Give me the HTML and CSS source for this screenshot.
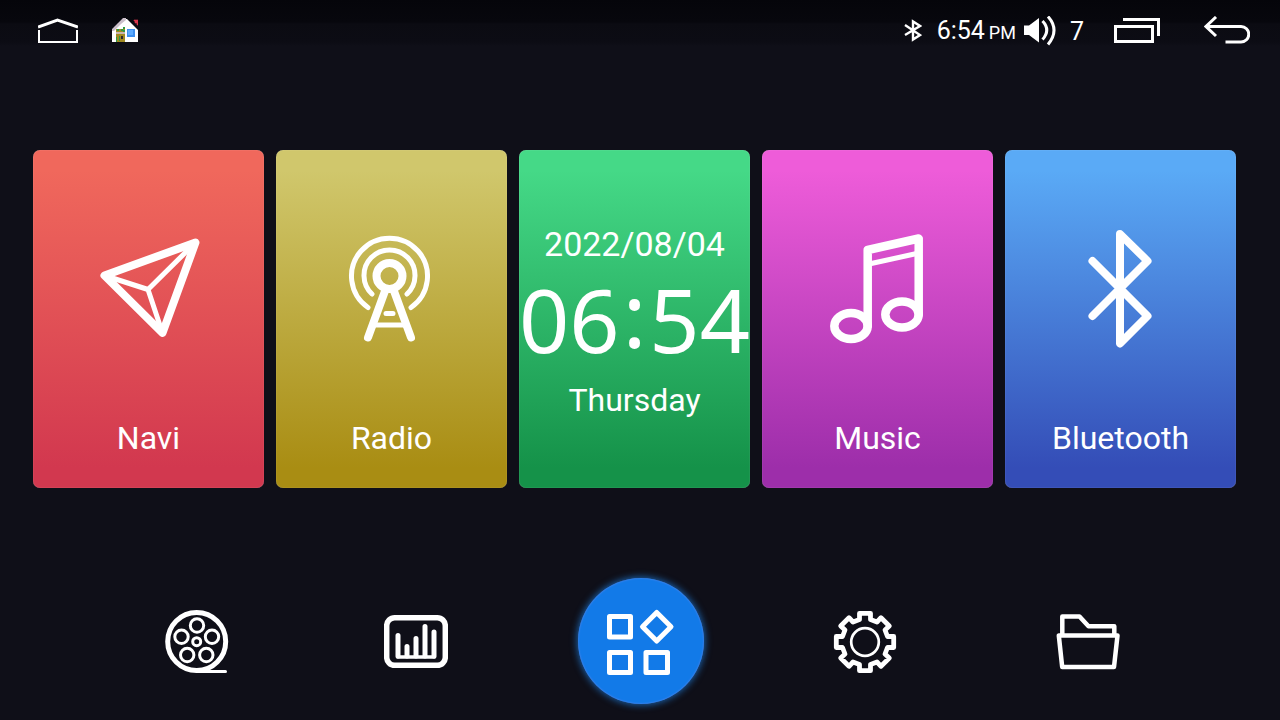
FILE: index.html
```html
<!DOCTYPE html>
<html lang="en">
<head>
<meta charset="utf-8">
<meta name="viewport" content="width=device-width, initial-scale=1">
<title>Home</title>
<link rel="stylesheet" href="styles.css">
</head>
<body>
<header class="status">
  <button class="plain" aria-label="Home">
    <svg width="40" height="26" viewBox="0 0 40 26" fill="none" stroke="#fff">
      <path d="M0 9 19.500 2 40 9" stroke-width="3"/>
      <path d="M1 12V24H39V12" stroke-width="2"/>
    </svg>
  </button>
  <button class="plain launcher" aria-label="Launcher">
    <svg width="26" height="26" viewBox="0 0 26 26">
      <path d="M0 12 12 1h3l9 9 2 2v12H0z" fill="#fff"/>
      <path d="M0 13v-2l3-3 3-3 5-5h3v2l-5 4-4 4-3 3z" fill="#cbbfca"/>
      <path d="M22 2h4v5h-1V5h-2V3h-1z" fill="#d8384c" stroke="#d8384c" stroke-width=".6"/>
      <path d="M4 11h9v13H4z" fill="#a08a22"/>
      <path d="M5 11h2v2H5zM9 11h2v2H9zM7 18h1v5H7zM4 19h1v5H4zM11 12h2v2h-2zM11 9h2v2h-2z" fill="#2f9b45"/>
      <path d="M4 14h9v2H4z" fill="#c9b5b0"/>
      <path d="M9 18h2v3H9z" fill="#2a2530"/>
      <path d="M15 11h8v8h-8z" fill="#3c8ff0"/>
      <path d="M16 12h5v5h-5z" fill="#5dabff"/>
    </svg>
  </button>
  <div class="system">
    <svg width="18" height="24" viewBox="0 0 18 24" fill="none" stroke="#fff" stroke-width="2.400" role="img" aria-label="Bluetooth on">
      <path d="M1 6 16 16 9 20.500V2.500L16 7 1 16"/>
    </svg>
    <div class="clock"><span>6:54</span><span class="period">PM</span></div>
    <div class="volume">
      <svg width="32" height="30" viewBox="0 0 32 30" role="img" aria-label="Volume">
        <path d="M0 9.500H5L15 2V26.500L5 19H0z" fill="#fff"/>
        <path d="M18.500 5Q27 14 18.500 23.500M24 0.500Q36 14 24 28.500" fill="none" stroke="#fff" stroke-width="3"/>
      </svg>
      <span>7</span>
    </div>
  </div>
  <button class="plain recents" aria-label="Recent apps">
    <svg width="46" height="26" viewBox="0 0 46 26" fill="none" stroke="#fff" stroke-width="3">
      <path d="M1.500 8.500H38.500V23.500H1.500zM9 1.500H44.500V18"/>
    </svg>
  </button>
  <button class="plain back" aria-label="Back">
    <svg width="46" height="30" viewBox="0 0 46 30" fill="none" stroke="#fff" stroke-width="3">
      <path d="M12 1 2 10.500 12 20M2 10.500H37A7.700 7.700 0 0 1 37 26H21.500"/>
    </svg>
  </button>
</header>

<main class="cards">
  <button class="card navi">
    <svg class="art" viewBox="0 0 120 120">
      <path d="M15.500 46.500 106.500 13.500 73.500 104z" stroke-width="8"/>
      <path d="M15.500 46.500 59 60.500 106.500 13.500M59 60.500 73.500 104" stroke-width="5"/>
    </svg>
    <span>Navi</span>
  </button>
  <button class="card radio">
    <svg class="art" viewBox="0 0 120 120">
      <circle cx="57.500" cy="47" r="13" stroke-width="8"/>
      <path d="M40 65A25.500 25.500 0 1 1 75 65M36 78.500A38 38 0 1 1 79 78.500M42 96H74M54 84.500H61" stroke-width="5"/>
      <path d="M53 62 36 108.500M62 62 79 108.500" stroke-width="8"/>
    </svg>
    <span>Radio</span>
  </button>
  <section class="card today" aria-label="Date and time">
    <span class="date">2022/08/04</span>
    <div class="time"><span>06</span><span class="colon">:</span><span>54</span></div>
    <span class="day">Thursday</span>
  </section>
  <button class="card music">
    <svg class="art" viewBox="0 0 120 120">
      <g stroke-width="8.500">
        <ellipse cx="33" cy="97" rx="16.700" ry="13"/>
        <ellipse cx="84" cy="85.500" rx="16.700" ry="13"/>
        <path d="M49.700 97V21L100.700 9.500V85.500"/>
      </g>
      <path d="M51 35 101 24" stroke-width="5"/>
    </svg>
    <span>Music</span>
  </button>
  <button class="card bluetooth">
    <svg class="art" viewBox="0 0 120 120" stroke-width="8">
      <path d="M31.500 32 86.500 87 59 114.500V5L86.500 32 31.500 87"/>
    </svg>
    <span>Bluetooth</span>
  </button>
</main>

<nav class="dock">
  <button class="plain" aria-label="Video">
    <svg width="64" height="64" viewBox="0 0 64 64" fill="none" stroke="#fff" stroke-width="3" stroke-linecap="round">
      <circle cx="31.700" cy="31.500" r="29" stroke-width="5"/>
      <circle cx="32" cy="15.500" r="6.700"/>
      <circle cx="16.500" cy="26.700" r="6.700"/>
      <circle cx="47" cy="26.700" r="6.700"/>
      <circle cx="22.200" cy="45" r="6.700"/>
      <circle cx="41.300" cy="45" r="6.700"/>
      <circle cx="31.700" cy="31.700" r="4"/>
      <path d="M32 61.500H60.500"/>
    </svg>
  </button>
  <button class="plain" aria-label="Equalizer">
    <svg width="64" height="64" viewBox="0 0 64 64" fill="none" stroke="#fff" stroke-width="5" stroke-linecap="round">
      <rect x="2.700" y="7.700" width="58.600" height="47.600" rx="8" stroke-width="5.500"/>
      <path d="M14 25.500V46M23 36.500V46M32 28.500V46M41 16.500V46M50 22V46"/>
      <path d="M13.500 47H50.500" stroke-width="3.500"/>
    </svg>
  </button>
  <button class="apps" aria-label="All apps">
    <svg width="72" height="72" viewBox="0 0 72 72" fill="none" stroke="#fff" stroke-width="5" stroke-linejoin="round">
      <rect x="4.500" y="11.500" width="21" height="20.500"/>
      <rect x="4.500" y="47.500" width="21" height="20"/>
      <rect x="41" y="47.500" width="21.500" height="20"/>
      <path d="M51.700 7.500 66 21.700 51.700 36 37.500 21.700z"/>
    </svg>
  </button>
  <button class="plain" aria-label="Settings">
    <svg width="64" height="64" viewBox="-32 -32 64 64" fill="none" stroke="#fff" stroke-linejoin="round">
      <path stroke-width="4.800" d="M-5.500-28.700H5.500V-22.500L12-20 16-24.300 24.300-16 20-12 22.500-5.500H28.700V5.500H22.500L20 12 24.300 16 16 24.300 12 20 5.500 22.500V28.700H-5.500V22.500L-12 20-16 24.300-24.300 16-20 12-22.500 5.500H-28.700V-5.500H-22.500L-20-12-24.300-16-16-24.300-12-20-5.500-22.500z"/>
      <circle r="13.800" stroke-width="2.700"/>
    </svg>
  </button>
  <button class="plain" aria-label="Files">
    <svg width="64" height="64" viewBox="0 0 64 64" fill="none" stroke="#fff" stroke-width="4.500" stroke-linejoin="round">
      <path d="M6.300 25V6.500H23.500L32.500 16.200H58.300V25M2.800 25.500H61.500L58 57H6.200z"/>
    </svg>
  </button>
</nav>
</body>
</html>
```

FILE: styles.css
```css
* {
  box-sizing: border-box;
}

body {
  margin: 0;
  min-height: 100vh;
  background: #0f0f18;
  color: #fff;
  font-family: Roboto, "Liberation Sans", sans-serif;
}

button {
  border: 0;
  padding: 0;
  color: inherit;
  font: inherit;
  cursor: pointer;
}

svg {
  display: block;
}

.plain {
  background: none;
}

.status {
  display: flex;
  align-items: center;
  height: 60px;
  padding: 2px 30px 0 38px;
  background: linear-gradient(#05050a 0, #07070d 22px, #0b0b12 24px, #0c0c14 42px, #0f0f18 46px);
}

.launcher {
  margin-left: 34px;
}

.system {
  display: flex;
  align-items: center;
  margin-left: auto;
  font-size: 25px;
  line-height: 32px;
}

.clock {
  display: flex;
  align-items: baseline;
  gap: 4px;
  margin-left: 15px;
  padding-top: 2px;
}

.period {
  font-size: 18px;
}

.volume {
  display: flex;
  align-items: center;
  gap: 14px;
  margin-left: 8px;
}

.volume span {
  padding-top: 2px;
}

.recents {
  margin-left: 30px;
}

.back {
  margin-left: 44px;
}

.cards {
  display: grid;
  grid-template-columns: repeat(5, 1fr);
  gap: 12px;
  padding: 90px 44px 0 33px;
}

.card {
  display: flex;
  flex-direction: column;
  align-items: center;
  min-height: 338px;
  border-radius: 7px;
  box-shadow: inset 0 0 1px rgba(255, 255, 255, 0.5);
  font-size: 32px;
  line-height: 38px;
}

button.card {
  gap: 70px;
  padding: 79px 0 31px;
}

.art {
  width: 120px;
  height: 120px;
  fill: none;
  stroke: #fff;
  stroke-linecap: round;
  stroke-linejoin: round;
}

.navi {
  background: linear-gradient(#f0685c 6%, #d2384f 94%);
}

.radio {
  background: linear-gradient(#d0c76c 6%, #a98d13 94%);
}

.today {
  background: linear-gradient(#45d987 6%, #159249 94%);
  padding-top: 74px;
}

.music {
  background: linear-gradient(#ee5cd9 6%, #9d2eaa 94%);
}

.bluetooth {
  background: linear-gradient(#5aaaf6 6%, #344db7 94%);
}

.date {
  font-size: 34px;
  line-height: 40px;
}

.time {
  display: flex;
  align-items: center;
  gap: 3px;
  margin-bottom: 7px;
  font-family: "Noto Sans", sans-serif;
  font-size: 88px;
  line-height: 110px;
}

.colon {
  padding-bottom: 10px;
  line-height: 100px;
}

.dock {
  display: grid;
  grid-template-columns: 218fr 220fr 230fr 218fr 228fr;
  align-items: center;
  justify-items: center;
  padding: 90px 78px 16px 88px;
}

.dock .plain {
  padding-top: 2px;
}

.apps {
  display: grid;
  place-items: center;
  width: 126px;
  height: 126px;
  border-radius: 50%;
  background: #127ae8;
  box-shadow: inset 0 0 2px #6d8cf0, 0 0 7px 1px rgba(30, 120, 210, 0.8);
}
```
